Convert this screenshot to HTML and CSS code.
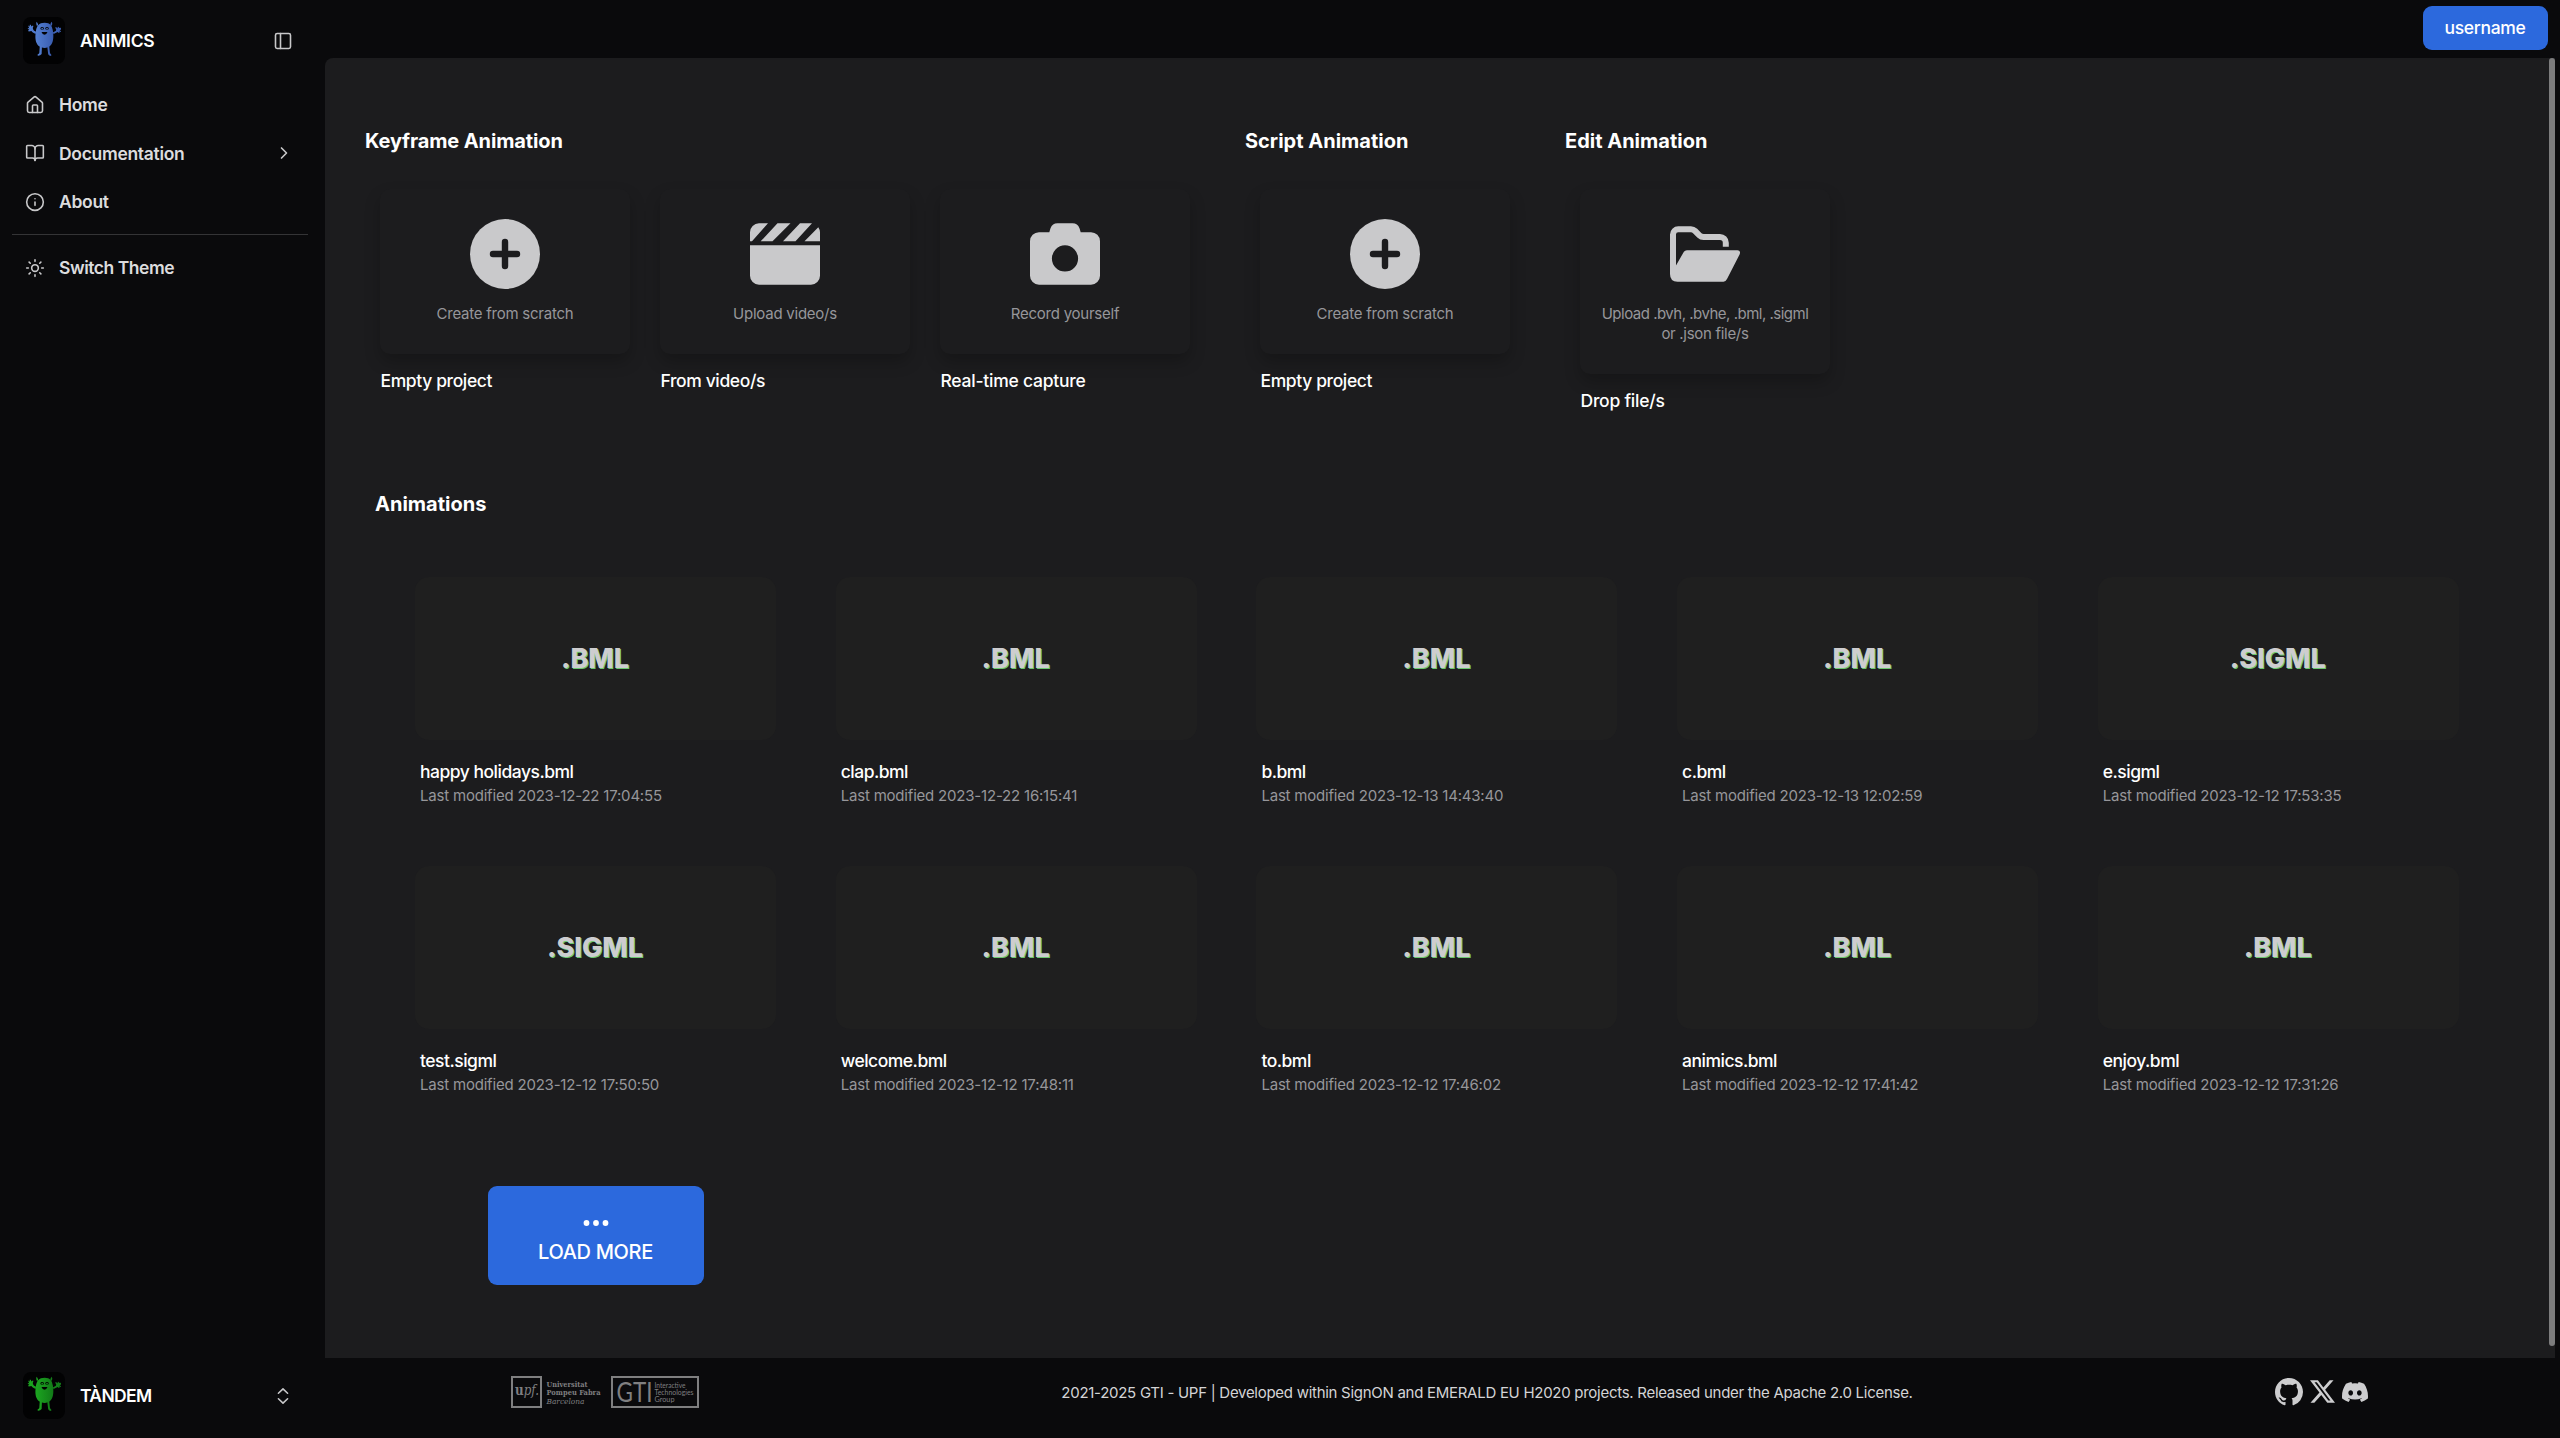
FILE: index.html
```html
<!DOCTYPE html>
<html lang="en">
<head>
<meta charset="utf-8">
<title>Animics</title>
<link rel="stylesheet" href="styles.css">
</head>
<body>
<svg class="defs" width="0" height="0" aria-hidden="true">
  <defs>
    <linearGradient id="blue" x1="0" x2="1"><stop offset="0" stop-color="#5480d2"/><stop offset="1" stop-color="#395caf"/></linearGradient>
    <linearGradient id="green" x1="0" x2="1"><stop offset="0" stop-color="#1ca620"/><stop offset="1" stop-color="#127a18"/></linearGradient>
    <symbol id="monster" viewBox="70 52 125 140">
      <path d="M110 66q3 2 5 8l-3 6q-4-8-2-14zM156 66q-3 2-5 8l4 5q4-6 1-13z"/>
      <path d="M134.500 69c17 0 22 10 24 22c4 20 4 53-24 53s-30-28-26-50c2-15 9-25 26-25z"/>
      <path d="M85 77l5 3 0-5 3 0 2 5 4-3 2 2-2 6 2 6c3 3 5 4 9 5l0 6c-8 0-12-4-15-8l-8 1-2-3 4-2-5-3 1-2 4 1zM183 84l-4 1-4-4-2 1 1 4-6-4-2 2 3 5-1 4-9 5 2 5 12-6 4 3 2-2-1-3 5 2 0-3-4-2 4-3z"/>
      <path d="M120 138h6.500l-1 24q-5 6-12 5l0-3q4-3 5-5zM142 138h6l2 20q1 4 4 6l0 4q-7 0-9-5z"/>
      <g class="monster-face"><ellipse cx="127" cy="86" rx="5" ry="4"/><ellipse cx="141.500" cy="86" rx="5" ry="4"/><path d="M125 97h18q-3 8-9 8t-9-8z"/></g>
      <g fill="currentColor"><circle cx="127" cy="86.500" r="2.500"/><circle cx="141.500" cy="86.500" r="2.500"/></g>
    </symbol>
    <symbol id="plus" viewBox="0 0 70 70"><circle cx="35" cy="35" r="35"/><path class="cut" d="M35 23v24M23 35h24"/></symbol>
  </defs>
</svg>

<aside class="sidebar">
  <header class="brand">
    <span class="logo logo-blue"><svg fill="url(#blue)"><use href="#monster"/></svg></span>
    <span class="brand-name">ANIMICS</span>
    <svg class="line-icon" viewBox="0 0 24 24"><rect x="3" y="3" width="18" height="18" rx="2"/><path d="M9 3v18"/></svg>
  </header>
  <nav class="menu">
    <a class="menu-item"><svg class="line-icon" viewBox="0 0 24 24"><path d="M15 21v-8a1 1 0 0 0-1-1h-4a1 1 0 0 0-1 1v8"/><path d="M3 10a2 2 0 0 1 .709-1.528l7-6a2 2 0 0 1 2.582 0l7 6A2 2 0 0 1 21 10v9a2 2 0 0 1-2 2H5a2 2 0 0 1-2-2z"/></svg><span>Home</span></a>
    <a class="menu-item"><svg class="line-icon" viewBox="0 0 24 24"><path d="M12 7v14"/><path d="M3 18a1 1 0 0 1-1-1V4a1 1 0 0 1 1-1h5a4 4 0 0 1 4 4 4 4 0 0 1 4-4h5a1 1 0 0 1 1 1v13a1 1 0 0 1-1 1h-6a3 3 0 0 0-3 3 3 3 0 0 0-3-3z"/></svg><span>Documentation</span><svg class="line-icon chevron" viewBox="0 0 24 24"><path d="m9 18 6-6-6-6"/></svg></a>
    <a class="menu-item"><svg class="line-icon" viewBox="0 0 24 24"><circle cx="12" cy="12" r="10"/><path d="M12 16v-4M12 8h.01"/></svg><span>About</span></a>
  </nav>
  <hr class="divider">
  <a class="menu-item"><svg class="line-icon" viewBox="0 0 24 24"><circle cx="12" cy="12" r="4"/><path d="M12 2v2M12 20v2M4.930 4.930l1.410 1.410M17.660 17.660l1.410 1.410M2 12h2M20 12h2M6.340 17.660l-1.410 1.410M19.070 4.930l-1.410 1.410"/></svg><span class="tight">Switch Theme</span></a>
  <footer class="brand brand-bottom">
    <span class="logo logo-green"><svg fill="url(#green)"><use href="#monster"/></svg></span>
    <span class="brand-name tandem">TÀNDEM</span>
    <svg class="line-icon" viewBox="0 0 24 24"><path d="m6.500 8.700 5.500-5.200 5.500 5.200M6.500 15.300l5.500 5.200 5.500-5.200"/></svg>
  </footer>
</aside>

<div class="page">
  <div class="topbar"><button class="user">username</button></div>

  <main class="main">
    <div class="groups">
      <section class="group">
        <h2 class="keyframe">Keyframe Animation</h2>
        <div class="tiles">
          <div class="tile"><div class="tile-box"><svg><use href="#plus"/></svg><p>Create from scratch</p></div><span class="label">Empty project</span></div>
          <div class="tile"><div class="tile-box"><svg viewBox="0 0 70 70"><path d="M9 4.300h9L2 22.300H0V13.300a9 9 0 0 1 9-9zM27.500 4.300h13L22.500 22.300H10.700zM50 4.300h12L45.500 22.300H33zM68.300 8.300q1.700 2.500 1.700 5v9H54.500zM0 26.200h70v30.500a9 9 0 0 1-9 9H9a9 9 0 0 1-9-9z"/></svg><p>Upload video/s</p></div><span class="label">From video/s</span></div>
          <div class="tile"><div class="tile-box"><svg viewBox="0 0 70 70"><path fill-rule="evenodd" d="M9 13.200h10.300l1.200-4a7.500 7.500 0 0 1 7-4.900h15a7.500 7.500 0 0 1 7 4.900l1.200 4H61a9 9 0 0 1 9 9v34.500a9 9 0 0 1-9 9H9a9 9 0 0 1-9-9V22.200a9 9 0 0 1 9-9zM48.100 39.400a13.100 13.100 0 1 0-26.200 0a13.100 13.100 0 1 0 26.200 0z"/></svg><p>Record yourself</p></div><span class="label realtime">Real-time capture</span></div>
        </div>
      </section>
      <section class="group">
        <h2>Script Animation</h2>
        <div class="tiles">
          <div class="tile"><div class="tile-box"><svg><use href="#plus"/></svg><p>Create from scratch</p></div><span class="label">Empty project</span></div>
        </div>
      </section>
      <section class="group">
        <h2>Edit Animation</h2>
        <div class="tiles">
          <div class="tile"><div class="tile-box"><svg viewBox="0 0 70 70"><path d="M3 54V15.500a5.200 5.200 0 0 1 5.200-5.200h12.700a6 6 0 0 1 4.200 1.700l4.300 4.300a6 6 0 0 0 4.200 1.700h16.400a5.800 5.800 0 0 1 5.800 5.800V27.700" fill="none" stroke="#c9c9cb" stroke-width="6"/><path d="M0 50L6 46.500 13.900 32.700q1-1.500 3-1.500H67.500q3.500.5 2.200 4L57 60q-1.300 2.700-3.500 2.700H7.500Q0 62.700 0 55z"/></svg><p class="formats">Upload .bvh, .bvhe, .bml, .sigml<br><span class="formats-end">or .json file/s</span></p></div><span class="label drop">Drop file/s</span></div>
        </div>
      </section>
    </div>

    <section class="library">
      <h2>Animations</h2>
      <div class="files">
        <article class="file"><div class="preview">.BML</div><h3>happy holidays.bml</h3><p>Last modified 2023-12-22 17:04:55</p></article>
        <article class="file"><div class="preview">.BML</div><h3>clap.bml</h3><p>Last modified 2023-12-22 16:15:41</p></article>
        <article class="file"><div class="preview">.BML</div><h3>b.bml</h3><p>Last modified 2023-12-13 14:43:40</p></article>
        <article class="file"><div class="preview">.BML</div><h3>c.bml</h3><p>Last modified 2023-12-13 12:02:59</p></article>
        <article class="file"><div class="preview">.SIGML</div><h3>e.sigml</h3><p>Last modified 2023-12-12 17:53:35</p></article>
        <article class="file"><div class="preview">.SIGML</div><h3>test.sigml</h3><p>Last modified 2023-12-12 17:50:50</p></article>
        <article class="file"><div class="preview">.BML</div><h3>welcome.bml</h3><p>Last modified 2023-12-12 17:48:11</p></article>
        <article class="file"><div class="preview">.BML</div><h3>to.bml</h3><p>Last modified 2023-12-12 17:46:02</p></article>
        <article class="file"><div class="preview">.BML</div><h3>animics.bml</h3><p>Last modified 2023-12-12 17:41:42</p></article>
        <article class="file"><div class="preview">.BML</div><h3>enjoy.bml</h3><p>Last modified 2023-12-12 17:31:26</p></article>
      </div>
      <button class="load-more">
        <svg viewBox="0 0 26 8"><circle cx="3.500" cy="4" r="2.900"/><circle cx="13" cy="4" r="2.900"/><circle cx="22.500" cy="4" r="2.900"/></svg>
        <span>LOAD MORE</span>
      </button>
    </section>
    <div class="scroll-thumb"></div>
  </main>

  <footer class="footer">
    <div class="partners">
      <svg width="96" height="32" viewBox="0 0 96 32">
        <rect class="frame" x="1" y="1" width="29" height="30"/>
        <g class="serif">
          <text x="4" y="19" font-size="14" textLength="24" lengthAdjust="spacingAndGlyphs"><tspan font-weight="700">u</tspan><tspan font-style="italic">pf.</tspan></text>
          <text x="35.500" y="10.500" font-size="8" font-weight="700" textLength="41" lengthAdjust="spacingAndGlyphs">Universitat</text>
          <text x="35.500" y="19.300" font-size="8" font-weight="700" textLength="54" lengthAdjust="spacingAndGlyphs">Pompeu Fabra</text>
          <text x="35.500" y="28" font-size="8" font-style="italic" textLength="38" lengthAdjust="spacingAndGlyphs">Barcelona</text>
        </g>
      </svg>
      <svg width="88" height="32" viewBox="0 0 88 32">
        <rect class="frame" x="1" y="1" width="86" height="30"/>
        <text class="gti" x="5.500" y="25.500" font-size="26" textLength="36" lengthAdjust="spacingAndGlyphs">GTI</text>
        <g class="sans">
          <text x="43.500" y="12" font-size="7" textLength="31" lengthAdjust="spacingAndGlyphs">Interactive</text>
          <text x="43.500" y="19" font-size="7" textLength="39" lengthAdjust="spacingAndGlyphs">Technologies</text>
          <text x="43.500" y="26" font-size="7" textLength="20" lengthAdjust="spacingAndGlyphs">Group</text>
        </g>
      </svg>
    </div>
    <p class="copyright">2021-2025 GTI - UPF | Developed within SignON and EMERALD EU H2020 projects. Released under the Apache 2.0 License.</p>
    <div class="social">
      <svg class="github" viewBox="0 0 16 16"><path d="M8 0C3.580 0 0 3.580 0 8c0 3.540 2.290 6.530 5.470 7.590.4.070.55-.17.55-.38 0-.19-.01-.82-.01-1.490-2.010.37-2.530-.49-2.690-.94-.09-.23-.48-.94-.82-1.130-.28-.15-.68-.52-.01-.53.63-.01 1.080.58 1.230.82.72 1.210 1.870.87 2.330.66.07-.52.28-.87.51-1.070-1.780-.2-3.640-.89-3.640-3.950 0-.87.31-1.590.82-2.150-.08-.2-.36-1.020.08-2.120 0 0 .67-.21 2.200.82.64-.18 1.320-.27 2-.27s1.360.09 2 .27c1.530-1.040 2.200-.82 2.200-.82.44 1.100.16 1.920.08 2.120.51.56.82 1.270.82 2.150 0 3.070-1.870 3.750-3.650 3.950.29.25.54.73.54 1.480 0 1.070-.01 1.930-.01 2.200 0 .21.15.46.55.38A8.010 8.010 0 0 0 16 8c0-4.420-3.580-8-8-8"/></svg>
      <svg class="x" viewBox="0 0 16 16"><path d="M12.600.75h2.454l-5.360 6.142L16 15.250h-4.937l-3.867-5.070-4.425 5.070H.316l5.733-6.570L0 .75h5.063l3.495 4.633L12.601.75Zm-.86 13.028h1.360L4.323 2.145H2.865z"/></svg>
      <svg class="discord" viewBox="0 0 16 16"><path d="M13.545 2.907a13.200 13.200 0 0 0-3.257-1.011.05.05 0 0 0-.052.025c-.141.25-.297.577-.406.833a12.200 12.200 0 0 0-3.658 0 8 8 0 0 0-.412-.833.05.05 0 0 0-.052-.025c-1.125.194-2.220.534-3.257 1.011a.04.04 0 0 0-.021.018C.356 6.024-.213 9.047.066 12.032q.003.022.021.037a13.300 13.300 0 0 0 3.995 2.020.05.05 0 0 0 .056-.019q.463-.63.818-1.329a.05.05 0 0 0-.01-.059l-.018-.011a9 9 0 0 1-1.248-.595.05.05 0 0 1-.02-.066l.015-.019q.127-.095.248-.195a.05.05 0 0 1 .051-.007c2.619 1.196 5.454 1.196 8.041 0a.05.05 0 0 1 .053.007q.121.1.248.195a.05.05 0 0 1-.004.085 8 8 0 0 1-1.249.594.05.05 0 0 0-.03.03.05.05 0 0 0 .003.041c.24.465.515.909.817 1.329a.05.05 0 0 0 .056.019 13.200 13.200 0 0 0 4.001-2.020.05.05 0 0 0 .021-.037c.334-3.451-.559-6.449-2.366-9.106a.03.03 0 0 0-.02-.019m-8.198 7.307c-.789 0-1.438-.724-1.438-1.612s.637-1.613 1.438-1.613c.807 0 1.450.73 1.438 1.613 0 .888-.637 1.612-1.438 1.612m5.316 0c-.788 0-1.438-.724-1.438-1.612s.637-1.613 1.438-1.613c.807 0 1.451.73 1.438 1.613 0 .888-.631 1.612-1.438 1.612"/></svg>
    </div>
  </footer>
</div>
</body>
</html>
```
FILE: styles.css
```css
* { box-sizing: border-box; }

body {
  margin: 0;
  height: 1438px;
  display: flex;
  overflow: hidden;
  background: #0a0a0c;
  color: #fff;
  font-family: Inter, sans-serif;
}

h2, h3, p { margin: 0; font-weight: 400; }
.defs { position: absolute; }

button {
  border: 0;
  color: #fff;
  background: #2c69dd;
  font-family: inherit;
}

/* Sidebar */
.sidebar {
  width: 325px;
  flex: none;
  display: flex;
  flex-direction: column;
  padding: 17px 0 19px;
}

.brand {
  display: flex;
  align-items: center;
  height: 47px;
  padding: 0 32px 0 23px;
}

.brand-bottom { margin-top: auto; }

.logo {
  width: 42px;
  height: 47px;
  border-radius: 8px;
  background: #020203;
}

.logo svg { display: block; width: 42px; height: 47px; }
.logo-blue { color: #4a74c6; }
.logo-green { color: #18951d; }
.monster-face { fill: #020203; }

.brand-name {
  margin-left: 15px;
  flex: 1;
  font-size: 17.500px;
  font-weight: 600;
  letter-spacing: -0.230px;
}

.tandem { letter-spacing: -0.650px; }

.line-icon {
  width: 20px;
  height: 20px;
  flex: none;
  fill: none;
  stroke: #c8c8ca;
  stroke-width: 1.900;
  stroke-linecap: round;
  stroke-linejoin: round;
}

.menu { padding-top: 16.500px; }

.menu-item {
  display: flex;
  align-items: center;
  gap: 14px;
  height: 48.500px;
  padding: 0 31px 0 25px;
  color: #dcdcde;
  font-size: 17.500px;
  font-weight: 600;
  letter-spacing: -0.310px;
}

.tight { letter-spacing: -0.460px; }
.chevron { margin-left: auto; stroke-width: 2; }

.divider {
  width: 296px;
  height: 1px;
  margin: 7.500px 0 9px 12px;
  border: 0;
  background: #343436;
}

/* Page */
.page {
  flex: 1;
  display: flex;
  flex-direction: column;
  padding-right: 5px;
}

.topbar {
  height: 58px;
  display: flex;
  justify-content: flex-end;
  padding: 6px 7px 0 0;
}

.user {
  width: 125px;
  height: 44px;
  border-radius: 9px;
  padding: 0 1px 1px 0;
  font-size: 17.500px;
  font-weight: 500;
  letter-spacing: -0.300px;
}

.main {
  position: relative;
  height: 1300px;
  padding: 66px 40px 0;
  border-radius: 8px 0 0 0;
  background: #1c1c1e;
}

.scroll-thumb {
  position: absolute;
  top: 0;
  right: 0;
  width: 6px;
  height: 1288px;
  border-radius: 3px;
  background: #7c7c7d;
}

h2 {
  font-size: 20px;
  font-weight: 700;
  line-height: 34px;
}

.keyframe { letter-spacing: -0.120px; }

.groups { display: flex; gap: 40px; height: 290px; }
.tiles { display: flex; align-items: flex-start; padding-top: 31px; }
.tile { width: 280px; padding: 0 15px; }

.tile-box {
  display: flex;
  flex-direction: column;
  align-items: center;
  gap: 15px;
  padding: 30px 0;
  border-radius: 10px;
  background: #1c1c1e;
  box-shadow: 0 8px 16px rgba(0, 0, 0, 0.220);
}

.tile-box svg { width: 70px; height: 70px; fill: #c9c9cb; }
.cut { fill: none; stroke: #1c1c1e; stroke-width: 6.400; stroke-linecap: round; }

.tile-box p {
  color: #96969a;
  font-size: 15px;
  line-height: 20px;
  letter-spacing: -0.240px;
  text-align: center;
  white-space: nowrap;
}

.tile-box .formats { letter-spacing: -0.500px; }
.formats-end { letter-spacing: -0.300px; }

.label {
  display: block;
  margin-top: 13px;
  padding-left: 0.500px;
  font-size: 17.500px;
  font-weight: 500;
  line-height: 27px;
  letter-spacing: -0.380px;
}

.realtime { letter-spacing: -0.240px; }
.drop { letter-spacing: -0.240px; }

/* Library */
.library { padding: 73px 10px 0; }

.files {
  display: grid;
  grid-template-columns: repeat(5, 361px);
  column-gap: 59.700px;
  row-gap: 56px;
  padding: 56px 0 0 40px;
}

.file { height: 233px; }

.preview {
  height: 163px;
  margin-bottom: 20px;
  padding-right: 1px;
  border-radius: 14px;
  background: #1f1f1f;
  color: #cdcdcf;
  font-size: 27px;
  font-weight: 800;
  line-height: 163px;
  text-align: center;
  text-shadow: 1px 1px 0 #6cc870;
}

.file h3 {
  padding-left: 5px;
  font-size: 17.500px;
  font-weight: 500;
  line-height: 24px;
  letter-spacing: -0.500px;
}

.file p {
  padding-left: 5px;
  color: #96969a;
  font-size: 15px;
  line-height: 24px;
  letter-spacing: -0.200px;
}

.load-more {
  display: flex;
  flex-direction: column;
  align-items: center;
  width: 216px;
  height: 99px;
  margin: 87px 0 0 112.500px;
  padding: 33px 0 0;
  border-radius: 9px;
  font-size: 20px;
  font-weight: 500;
  line-height: 28px;
  letter-spacing: -0.320px;
}

.load-more svg { width: 26px; height: 8px; margin-bottom: 11px; fill: #fff; }

/* Footer */
.footer {
  flex: 1;
  display: flex;
  align-items: center;
  justify-content: space-between;
  padding: 0 187px 13px 186px;
}

.partners { display: flex; gap: 4px; }
.partners svg { overflow: visible; }
.partners text { fill: #7f7f80; }
.frame { fill: none; stroke: #7f7f80; stroke-width: 2; }
.serif { font-family: "DejaVu Serif", serif; }
.sans { font-family: Lato, sans-serif; }
.gti { font-family: Lato, sans-serif; }

.copyright {
  color: #d4d4d6;
  font-size: 15px;
  line-height: 20px;
  letter-spacing: -0.280px;
  padding-top: 2px;
}

.social { display: flex; align-items: center; gap: 7px; fill: #cdcdcf; }
.github { width: 28px; height: 28px; }
.x { width: 25px; height: 25px; }
.discord { width: 26px; height: 26px; }
```
